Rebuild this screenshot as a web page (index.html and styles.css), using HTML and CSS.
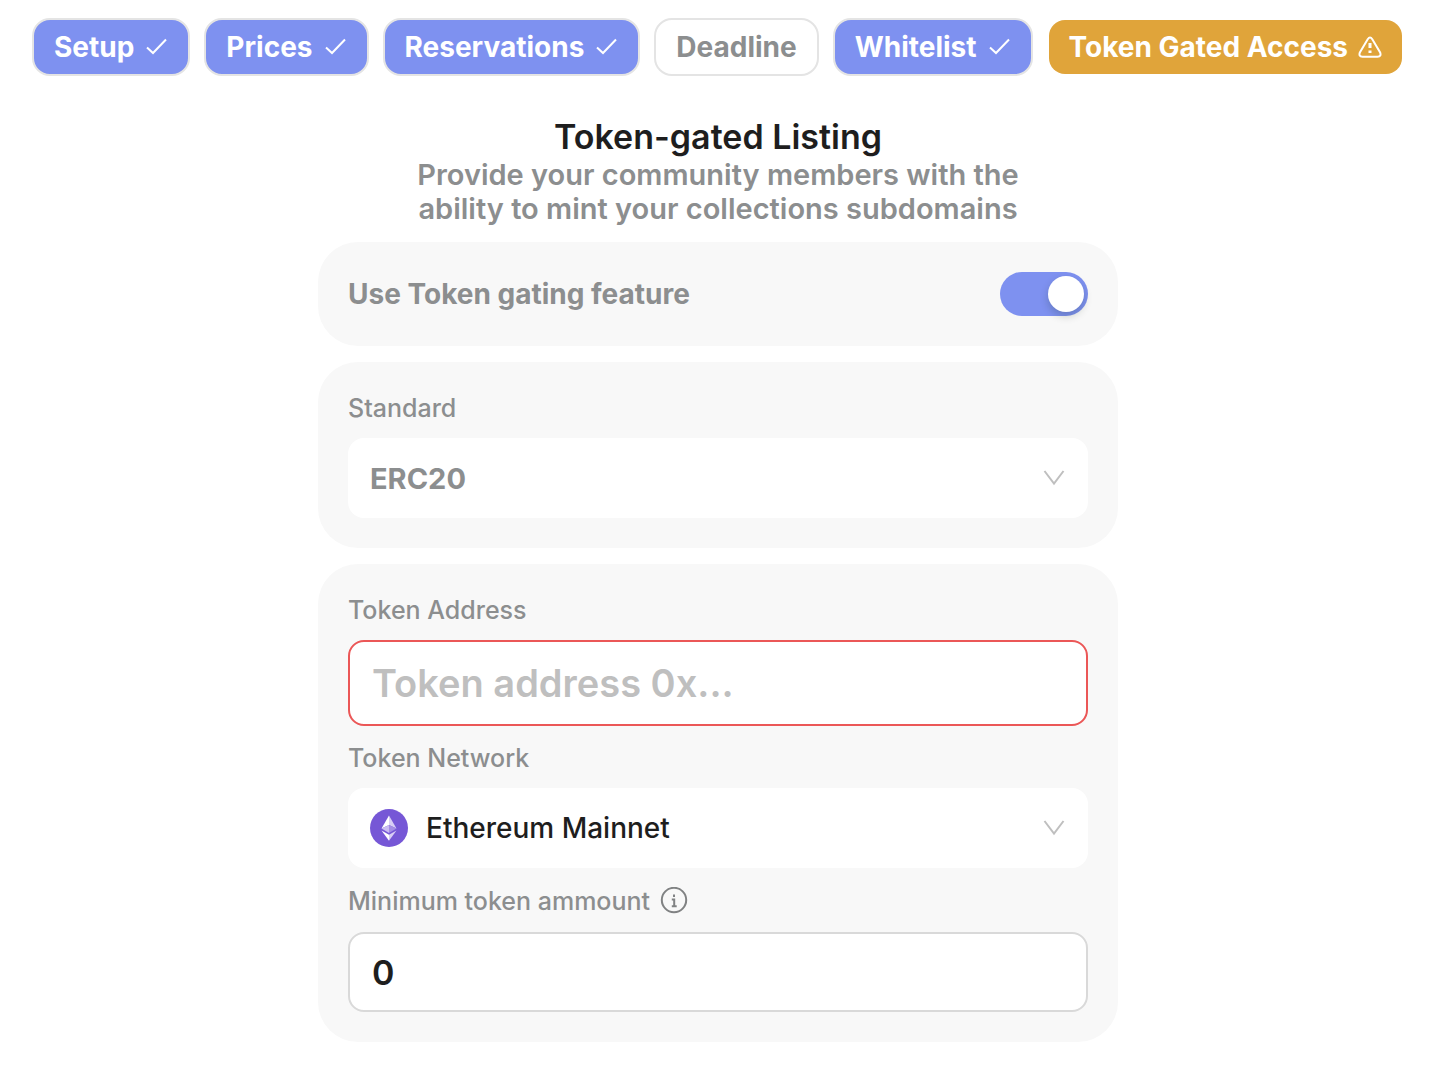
FILE: index.html
```html
<!DOCTYPE html>
<html lang="en">
<head>
<meta charset="utf-8">
<meta name="viewport" content="width=device-width, initial-scale=1">
<title>Token-gated Listing</title>
<link rel="stylesheet" href="styles.css">
</head>
<body>
<nav class="steps" aria-label="Listing steps">
  <button type="button" class="step step-done">Setup <svg class="step-icon" viewBox="0 0 24 24" aria-hidden="true"><path d="M3 12.500 9 18 22 4.500"/></svg></button>
  <button type="button" class="step step-done">Prices <svg class="step-icon" viewBox="0 0 24 24" aria-hidden="true"><path d="M3 12.500 9 18 22 4.500"/></svg></button>
  <button type="button" class="step step-done">Reservations <svg class="step-icon" viewBox="0 0 24 24" aria-hidden="true"><path d="M3 12.500 9 18 22 4.500"/></svg></button>
  <button type="button" class="step">Deadline</button>
  <button type="button" class="step step-done">Whitelist <svg class="step-icon" viewBox="0 0 24 24" aria-hidden="true"><path d="M3 12.500 9 18 22 4.500"/></svg></button>
  <button type="button" class="step step-warning" aria-current="step">Token Gated Access <svg class="step-icon" viewBox="0 0 24 24" aria-hidden="true"><path d="M9.700 4.200Q12 .8 14.300 4.200L22 17.200Q23.800 21.500 19.500 21.800H4.500Q.2 21.500 2 17.200Z"/><path class="mark" d="M12 8v5M12 15.500v2.500"/></svg></button>
</nav>

<main class="listing">
  <header class="intro">
    <h1>Token-gated Listing</h1>
    <p>Provide your community members with the ability to mint your collections subdomains</p>
  </header>

  <section class="card card-toggle">
    <label for="gating">Use Token gating feature</label>
    <input class="switch" id="gating" type="checkbox" role="switch" checked>
  </section>

  <section class="card">
    <div class="field">
      <label for="standard">Standard</label>
      <div class="picker">
        <select id="standard" class="muted"><option>ERC20</option></select>
        <svg class="chevron" viewBox="0 0 24 24" aria-hidden="true"><path d="M2.500 5 12 17.500 21.500 5"/></svg>
      </div>
    </div>
  </section>

  <section class="card">
    <div class="field">
      <label for="address">Token Address</label>
      <input class="text-box text-box-error" id="address" type="text" placeholder="Token address 0x..." aria-invalid="true">
    </div>
    <div class="field">
      <label for="network">Token Network</label>
      <div class="picker">
        <svg class="coin" viewBox="0 0 38 38" aria-hidden="true">
          <circle cx="19" cy="19" r="19" fill="#7657d6"/>
          <path fill="#fff" d="M19 6.500 11.500 19.500 19 16z"/>
          <path fill="#d8cdf5" d="M19 6.500 26.500 19.500 19 16z"/>
          <path fill="#cbbcf2" d="M11.500 19.500 19 16v8z"/>
          <path fill="#a48de5" d="M26.500 19.500 19 16v8z"/>
          <path fill="#fff" d="M11.500 21.500 19 25.800v6z"/>
          <path fill="#d8cdf5" d="M26.500 21.500 19 25.800v6z"/>
        </svg>
        <select id="network"><option>Ethereum Mainnet</option></select>
        <svg class="chevron" viewBox="0 0 24 24" aria-hidden="true"><path d="M2.500 5 12 17.500 21.500 5"/></svg>
      </div>
    </div>
    <div class="field">
      <div class="label-row">
        <label for="minimum">Minimum token ammount</label>
        <svg class="info" viewBox="0 0 28 28" aria-hidden="true"><circle cx="14" cy="13" r="12.200"/><path d="M11.800 12.500h2.400v6.500M11.800 19.200h4.900"/><path d="M14 7.500v2.400"/></svg>
      </div>
      <input class="text-box text-box-number" id="minimum" type="text" inputmode="numeric" value="0">
    </div>
  </section>
</main>
</body>
</html>
```
FILE: styles.css
```css
* {
  box-sizing: border-box;
}

body {
  margin: 0;
  padding: 18px 10px 32px 0;
  background: #fff;
  color: #1e1e1e;
  font-family: Inter, "Liberation Sans", sans-serif;
}

button,
input,
select {
  font-family: inherit;
}

.steps {
  display: flex;
  flex-wrap: wrap;
  justify-content: center;
  gap: 14px;
}

.step {
  display: flex;
  align-items: center;
  justify-content: center;
  gap: 10px;
  height: 58px;
  padding: 0 20px;
  border: 2px solid #e4e4e4;
  border-radius: 18px;
  background: #fff;
  color: #8c8e8f;
  font-size: 28px;
  font-weight: 700;
  white-space: nowrap;
}

.step-done {
  background: #7e91f0;
  color: #fff;
}

.step-warning {
  border-color: transparent;
  background: #e0a43a;
  background-clip: padding-box;
  color: #fff;
}

.step-icon {
  width: 24px;
  height: 24px;
  fill: none;
  stroke: currentColor;
  stroke-width: 2;
}

.step-icon .mark {
  stroke-width: 3;
}

.listing {
  display: flex;
  flex-direction: column;
  gap: 16px;
  max-width: 800px;
  margin: 40px auto 0;
}

.intro {
  text-align: center;
}

h1 {
  margin: 0;
  font-size: 34px;
  font-weight: 600;
  line-height: 42px;
}

.intro p {
  max-width: 640px;
  margin: 0 auto;
  color: #8c8e8f;
  font-size: 29px;
  font-weight: 600;
  line-height: 34px;
}

.card {
  display: flex;
  flex-direction: column;
  gap: 16px;
  padding: 30px;
  border-radius: 40px;
  background: #f8f8f8;
}

.card-toggle {
  flex-direction: row;
  align-items: center;
  justify-content: space-between;
  color: #8c8e8f;
  font-size: 28px;
  font-weight: 700;
}

.switch {
  display: flex;
  align-items: center;
  width: 88px;
  height: 44px;
  margin: 0;
  padding: 4px;
  border-radius: 22px;
  background: #bfbfbf;
  appearance: none;
}

.switch::before {
  content: "";
  width: 36px;
  height: 36px;
  border-radius: 50%;
  background: #fff;
  box-shadow: 0 4px 8px rgba(0, 35, 11, 0.2);
}

.switch:checked {
  justify-content: flex-end;
  background: #7e91f0;
}

.field {
  display: flex;
  flex-direction: column;
  gap: 14px;
  color: #8c8e8f;
  font-size: 25px;
  font-weight: 500;
  line-height: 32px;
}

.label-row {
  display: flex;
  align-items: center;
  gap: 10px;
  height: 34px;
}

.info {
  width: 28px;
  height: 28px;
  fill: none;
  stroke: #808283;
  stroke-width: 2;
}

.picker {
  display: flex;
  align-items: center;
  height: 80px;
  padding: 0 22px;
  border-radius: 16px;
  background: #fff;
}

.picker select {
  flex: 1;
  min-width: 0;
  padding: 0;
  border: 0;
  background: none;
  color: #1e1e1e;
  font-size: 28px;
  font-weight: 500;
  appearance: none;
}

.picker .muted {
  color: #8c8e8f;
  font-size: 29px;
  font-weight: 700;
}

.coin {
  width: 38px;
  height: 38px;
  margin-right: 18px;
}

.chevron {
  width: 24px;
  height: 24px;
  fill: none;
  stroke: #bfbfbf;
  stroke-width: 2;
}

.text-box {
  width: 100%;
  height: 86px;
  padding: 0 22px;
  border: 2px solid #d9d9d9;
  border-radius: 16px;
  background: #fff;
  color: #1e1e1e;
  font-size: 38px;
  font-weight: 600;
}

.text-box::placeholder {
  color: #bfbfbf;
}

.text-box-error {
  border-color: #eb5757;
}

.text-box-number {
  height: 80px;
  font-size: 34px;
}
```
